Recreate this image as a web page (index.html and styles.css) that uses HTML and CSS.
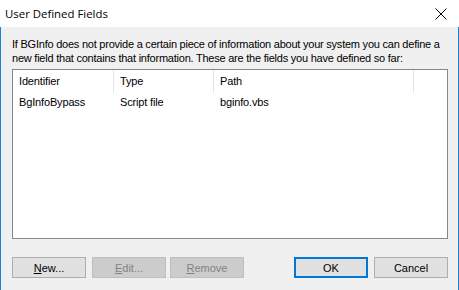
FILE: index.html
```html
<!DOCTYPE html>
<html lang="en">
	<head>
		<meta charset="UTF-8">
		<title>User Defined Fields</title>
		<link rel="stylesheet" href="styles.css">
	</head>
	<body>
		<div class="dialog">
			<div class="titlebar">
				<span class="title">User Defined Fields</span>
				<svg class="close" width="12" height="12" viewBox="0 0 12 12">
					<path d="M0.5 0.5 L11.5 11.5 M11.5 0.5 L0.5 11.5" stroke="#000" stroke-width="1" fill="none"/>
				</svg>
			</div>
			<div class="client">
				<p class="intro">
					If BGInfo does not provide a certain piece of information about your system you can define a<br>
					new field that contains that information. These are the fields you have defined so far:
				</p>
				<div class="listbox">
					<div class="row head">
						<span class="col c1">Identifier</span>
						<span class="col c2">Type</span>
						<span class="col c3">Path</span>
						<span class="col c4"></span>
					</div>
					<div class="row item">
						<span class="col c1">BgInfoBypass</span>
						<span class="col c2">Script file</span>
						<span class="col c3">bginfo.vbs</span>
					</div>
				</div>
				<div class="buttons">
					<div class="group">
						<button class="btn"><u>N</u>ew...</button>
						<button class="btn off"><u>E</u>dit...</button>
						<button class="btn off second"><u>R</u>emove</button>
					</div>
					<div class="group">
						<button class="btn default">OK</button>
						<button class="btn">Cancel</button>
					</div>
				</div>
			</div>
		</div>
	</body>
</html>
```
FILE: styles.css
```css
body {
	margin: 0;
	background: #f0f0f0;
	font-family: "Liberation Sans", Arial, sans-serif;
	font-size: 11px;
	color: #000;
}

.dialog {
	width: 459px;
	height: 290px;
	display: flex;
	flex-direction: column;
}

.titlebar {
	height: 27px;
	background: #fff;
	display: flex;
	align-items: center;
	justify-content: space-between;
	padding: 0 12px 0 5px;
}

.titlebar .title {
	font-family: "Open Sans", "Noto Sans", sans-serif;
	font-size: 11.4px;
	margin-top: -1px;
}

.titlebar .close {
	margin-top: 1px;
}

.client {
	flex: 1;
	border-left: 1px solid #1883d7;
	border-right: 1px solid #1883d7;
	padding: 10px 10px 0 11px;
}

.intro {
	margin: 0;
	line-height: 14px;
	white-space: nowrap;
	letter-spacing: -0.23px;
}

.listbox {
	margin-top: 4px;
	height: 168px;
	background: #fff;
	border: 1px solid #828790;
	letter-spacing: -0.15px;
}

.row {
	display: flex;
}

.row.head {
	height: 23px;
	line-height: 22px;
}

.row.head .col {
	border-right: 1px solid #e5e5e5;
}

.row.item {
	height: 18px;
	line-height: 18px;
}

.col {
	padding-left: 6px;
	box-sizing: border-box;
	white-space: nowrap;
}

.c1 { width: 101px; }
.c2 { width: 100px; }
.c3 { width: 200px; }
.c4 { flex: 1; border-right: none !important; }

.buttons {
	margin-top: 18px;
	display: flex;
	justify-content: space-between;
}

.group {
	display: flex;
	gap: 6px;
}

.btn {
	width: 74px;
	height: 21px;
	padding: 0;
	background: #e1e1e1;
	border: 1px solid #adadad;
	font-family: "Liberation Sans", Arial, sans-serif;
	font-size: 11px;
	color: #000;
}

.btn.off {
	background: #cccccc;
	border-color: #bfbfbf;
	color: #838383;
}

.btn.second {
	margin-left: -2px;
}

.btn.default {
	border: 2px solid #0078d7;
}
```
